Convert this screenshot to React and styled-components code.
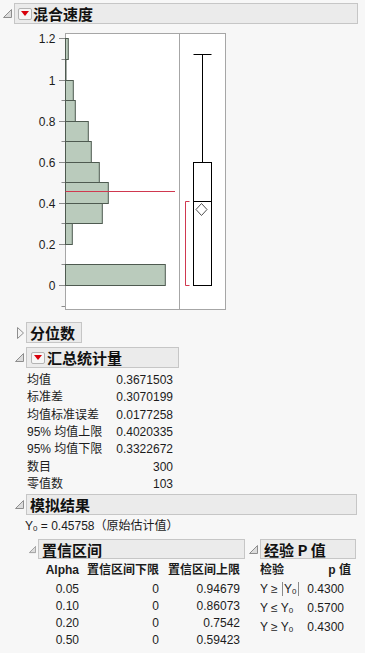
import React from 'react';
import styled, { createGlobalStyle } from 'styled-components';

const GlobalStyle = createGlobalStyle`
  html, body { margin: 0; padding: 0; background: #f7f7f7; }
  body {
    font-family: "Liberation Sans", "Noto Sans CJK SC", sans-serif;
    font-size: 12px;
    color: #1c1c1c;
  }
`;

const Page = styled.div`
  width: 365px;
  height: 653px;
  overflow: hidden;
  padding-top: 3px;
  box-sizing: border-box;
`;

const OutlineRow = styled.div`
  display: flex;
  align-items: center;
  margin-top: ${p => p.top || 0}px;
  margin-right: ${p => p.right || 0}px;
`;

const Toggle = styled.div`
  width: ${p => p.w}px;
  flex: none;
  display: flex;
  justify-content: flex-end;
  align-items: center;
  padding-right: 2px;
  box-sizing: border-box;
`;

const HeaderBox = styled.div`
  height: ${p => p.h || 21}px;
  box-sizing: border-box;
  border: 1px solid #c6c6c6;
  background: #ebebeb;
  display: flex;
  align-items: center;
  gap: ${p => p.gap ?? 2}px;
  padding: 0 3px;
  font-family: "Noto Sans CJK SC", "Liberation Sans", sans-serif;
  font-weight: bold;
  font-size: ${p => p.size || 15}px;
  color: #111;
  width: ${p => (p.width ? `${p.width}px` : 'auto')};
  flex: ${p => (p.width ? 'none' : 1)};
  white-space: nowrap;
`;

const DropButton = styled.span`
  width: 14px;
  height: 12px;
  box-sizing: border-box;
  border: 1px solid #b4b4b4;
  border-radius: 2px;
  background: #f6f6f6;
  display: flex;
  align-items: center;
  justify-content: center;
  flex: none;
  &::after {
    content: '';
    border-left: 4px solid transparent;
    border-right: 4px solid transparent;
    border-top: 5px solid #d8000c;
  }
`;

const ChartWrap = styled.div`
  margin-top: 4px;
  height: 287px;
`;

const StatsTable = styled.div`
  display: grid;
  grid-template-columns: auto 1fr;
  width: 146px;
  margin: 4px 0 0 27px;
  line-height: 17.33px;
`;

const Cell = styled.div`
  text-align: ${p => (p.right ? 'right' : 'left')};
  font-weight: ${p => (p.head ? 'bold' : 'normal')};
  padding-right: ${p => p.pr || 0}px;
  white-space: nowrap;
`;

const NoteLine = styled.div`
  margin: 3px 0 0 25px;
  line-height: 16px;
`;

const Sub = styled.span`
  font-size: 8px;
  vertical-align: -1px;
`;

const Bar = styled.span`
  display: inline-block;
  width: 1px;
  height: 14px;
  background: #8a8a8a;
  vertical-align: -3px;
  margin: 0 1px;
`;

const SplitRow = styled.div`
  display: flex;
  margin: 2px 0 0 29px;
  gap: 4px;
`;

const Column = styled.div`
  width: ${p => (p.width ? `${p.width}px` : 'auto')};
  flex: ${p => (p.width ? 'none' : 1)};
  margin-right: ${p => p.right || 0}px;
`;

const DataTable = styled.div`
  display: grid;
  grid-template-columns: ${p => p.cols};
  margin: 3px 0 0 ${p => p.left}px;
  line-height: 17px;
  & > div:nth-child(-n + ${p => p.n}) {
    margin-bottom: 2px;
  }
`;

const Corner = () => (
  <svg width="9" height="9" viewBox="0 0 9 9">
    <path d="M8.5 0.5 V8.5 H0.5 Z" fill="#dcdcdc" stroke="#8e8e8e" />
  </svg>
);

const Closed = () => (
  <svg width="7" height="12" viewBox="0 0 7 12">
    <path d="M0.5 0.5 L6.5 6 L0.5 11.5 Z" fill="#f4f4f4" stroke="#8e8e8e" />
  </svg>
);

const bins = [
  [1.1, 1.2, 68.3],
  [1.0, 1.1, 66],
  [0.9, 1.0, 73.3],
  [0.8, 0.9, 75.3],
  [0.7, 0.8, 88.3],
  [0.6, 0.7, 91.3],
  [0.5, 0.6, 99.3],
  [0.4, 0.5, 108.3],
  [0.3, 0.4, 102.3],
  [0.2, 0.3, 72.3],
  [0.0, 0.1, 165.3],
];

const yOf = v => 285 - 205.5 * v;

const Chart = () => {
  const ticks = [];
  for (let i = -1; i <= 12; i++) ticks.push(i / 10);
  return (
    <svg width="230" height="287" viewBox="0 28 230 287">
      <rect x="65.5" y="33.5" width="160" height="276" fill="#fff" stroke="#a6a6a6" />
      <line x1="179.5" y1="33.5" x2="179.5" y2="309.5" stroke="#a6a6a6" />
      {ticks.map((v, i) => {
        const y = Math.round(yOf(v)) + 0.5;
        const major = Math.round(v * 10) % 2 === 0 && v >= 0;
        return (
          <g key={i}>
            <line x1={major ? 59 : 61.5} y1={y} x2="65" y2={y} stroke="#8c8c8c" />
            {major && (
              <text
                x="55.5"
                y={y + 4}
                textAnchor="end"
                fontSize="12"
                fontFamily="Liberation Sans, sans-serif"
                fill="#1c1c1c"
              >
                {Math.round(v * 10) / 10}
              </text>
            )}
          </g>
        );
      })}
      {bins.map(([lo, hi, xr], i) => {
        const top = Math.round(yOf(hi)) + 0.5;
        const bot = Math.round(yOf(lo)) + 0.5;
        return (
          <rect
            key={i}
            x="65.5"
            y={top}
            width={Math.max(xr - 65.5, 0.5)}
            height={bot - top}
            fill="#bacbbc"
            stroke="#4e5a50"
          />
        );
      })}
      <line x1="65.5" y1="191.5" x2="175" y2="191.5" stroke="#d0384f" />
      <line x1="202.5" y1="54.5" x2="202.5" y2="162.5" stroke="#000" />
      <line x1="193.5" y1="54.5" x2="211.5" y2="54.5" stroke="#000" />
      <rect x="193.5" y="162.5" width="18" height="123" fill="none" stroke="#000" />
      <line x1="193.5" y1="201.5" x2="211.5" y2="201.5" stroke="#000" />
      <path d="M201.5 203.5 L207 209.5 L201.5 215.5 L196 209.5 Z" fill="none" stroke="#505050" />
      <path d="M189.5 201.5 H185.5 V285.5 H189.5" fill="none" stroke="#d0384f" />
    </svg>
  );
};

const stats = [
  ['均值', '0.3671503'],
  ['标准差', '0.3070199'],
  ['均值标准误差', '0.0177258'],
  ['95% 均值上限', '0.4020335'],
  ['95% 均值下限', '0.3322672'],
  ['数目', '300'],
  ['零值数', '103'],
];

const ciRows = [
  ['0.05', '0', '0.94679'],
  ['0.10', '0', '0.86073'],
  ['0.20', '0', '0.7542'],
  ['0.50', '0', '0.59423'],
];

const Y0 = () => (
  <>
    Y<Sub>0</Sub>
  </>
);

const pRows = [
  [<>Y ≥ <Bar /><Y0 /><Bar /></>, '0.4300'],
  [<>Y ≤ <Y0 /></>, '0.5700'],
  [<>Y ≥ <Y0 /></>, '0.4300'],
];

const App = () => (
  <Page>
    <GlobalStyle />
    <OutlineRow right={7}>
      <Toggle w={14}><Corner /></Toggle>
      <HeaderBox gap={1}>
        <DropButton />
        混合速度
      </HeaderBox>
    </OutlineRow>
    <ChartWrap>
      <Chart />
    </ChartWrap>

    <OutlineRow top={7}>
      <Toggle w={26}><Closed /></Toggle>
      <HeaderBox width={56}>分位数</HeaderBox>
    </OutlineRow>

    <OutlineRow top={4}>
      <Toggle w={26}><Corner /></Toggle>
      <HeaderBox width={153} style={{ paddingLeft: 4 }}>
        <DropButton />
        汇总统计量
      </HeaderBox>
    </OutlineRow>
    <StatsTable>
      {stats.map(([k, v]) => (
        <React.Fragment key={k}>
          <Cell>{k}</Cell>
          <Cell right>{v}</Cell>
        </React.Fragment>
      ))}
    </StatsTable>

    <OutlineRow top={1} right={8}>
      <Toggle w={26}><Corner /></Toggle>
      <HeaderBox>模拟结果</HeaderBox>
    </OutlineRow>
    <NoteLine>
      <Y0 /> = 0.45758（原始估计值）
    </NoteLine>

    <SplitRow>
      <Column width={216}>
        <OutlineRow>
          <Toggle w={9}><Corner /></Toggle>
          <HeaderBox h={20}>置信区间</HeaderBox>
        </OutlineRow>
        <DataTable cols="41px 80px 81px" left={9} n={3}>
          <Cell head right>Alpha</Cell>
          <Cell head right>置信区间下限</Cell>
          <Cell head right>置信区间上限</Cell>
          {ciRows.map(r => r.map((c, j) => <Cell key={r[0] + j} right>{c}</Cell>))}
        </DataTable>
      </Column>
      <Column right={9}>
        <OutlineRow>
          <Toggle w={11}><Corner /></Toggle>
          <HeaderBox h={20}>经验 P 值</HeaderBox>
        </OutlineRow>
        <DataTable cols="45px 46px" left={11} n={2}>
          <Cell head>检验</Cell>
          <Cell head right>p 值</Cell>
          {pRows.map(([t, p], i) => (
            <React.Fragment key={i}>
              <Cell>{t}</Cell>
              <Cell right pr={7}>{p}</Cell>
            </React.Fragment>
          ))}
        </DataTable>
      </Column>
    </SplitRow>
  </Page>
);

export default App;
